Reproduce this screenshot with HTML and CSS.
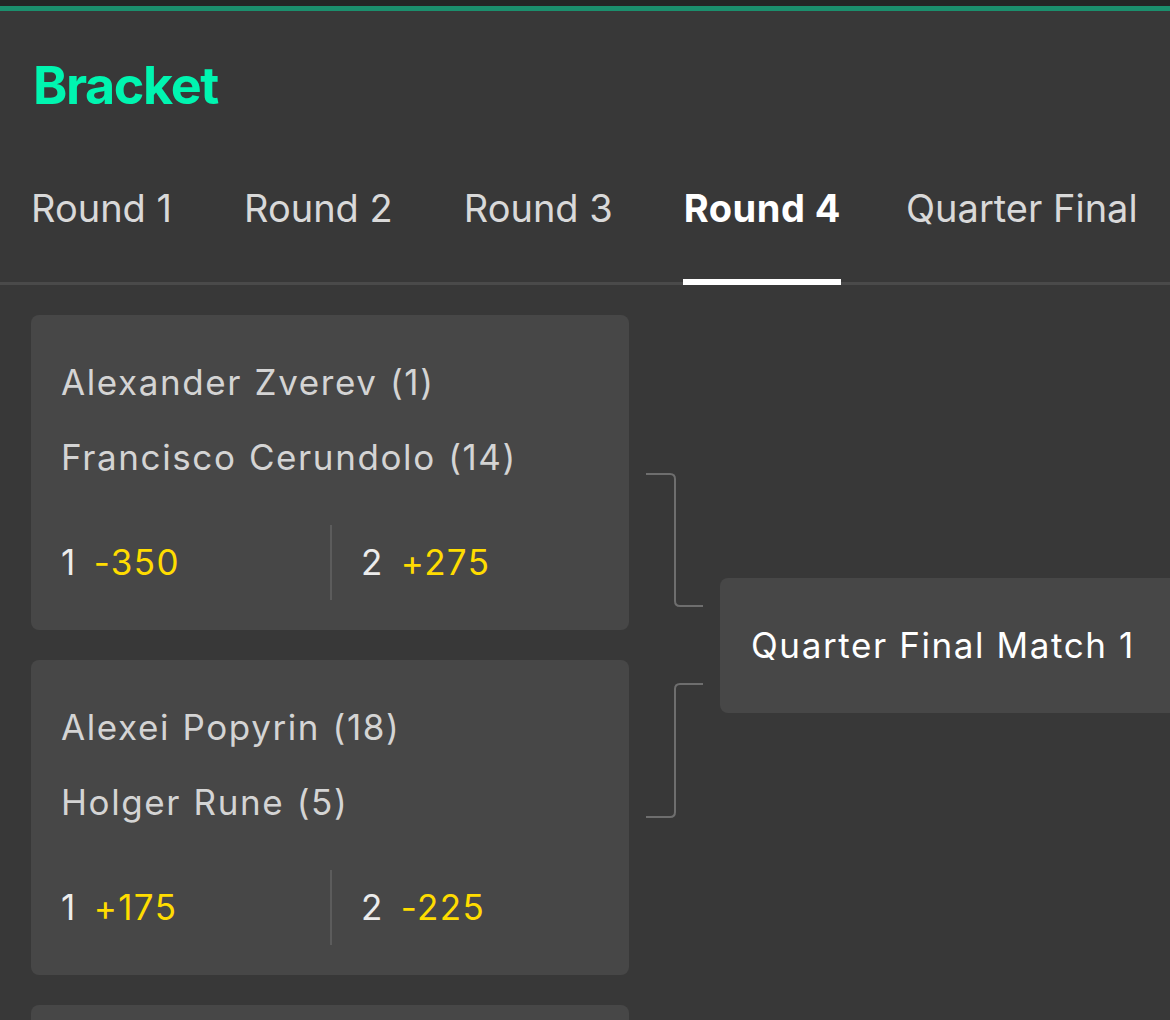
FILE: index.html
```html
<!DOCTYPE html>
<html lang="en">
<head>
<meta charset="utf-8">
<title>Bracket</title>
<link rel="stylesheet" href="styles.css">
</head>
<body>
<div class="topbar"></div>
<header class="header">
  <h1 class="title">Bracket</h1>
  <nav class="tabs">
    <span class="tab">Round 1</span>
    <span class="tab">Round 2</span>
    <span class="tab">Round 3</span>
    <span class="tab active">Round 4</span>
    <span class="tab">Quarter Final</span>
    <span class="tab">Semi Final</span>
  </nav>
</header>
<main class="bracket">
  <section class="pair">
    <div class="matches">
      <div class="card">
        <div class="names">
          <div class="name">Alexander Zverev (1)</div>
          <div class="name">Francisco Cerundolo (14)</div>
        </div>
        <div class="odds">
          <div class="odd"><span class="pick">1</span><span class="price">-350</span></div>
          <div class="odd"><span class="pick">2</span><span class="price">+275</span></div>
        </div>
      </div>
      <div class="card">
        <div class="names">
          <div class="name">Alexei Popyrin (18)</div>
          <div class="name">Holger Rune (5)</div>
        </div>
        <div class="odds">
          <div class="odd"><span class="pick">1</span><span class="price">+175</span></div>
          <div class="odd"><span class="pick">2</span><span class="price">-225</span></div>
        </div>
      </div>
    </div>
    <svg class="connector" width="91" height="660" viewBox="0 0 91 660" aria-hidden="true">
      <path d="M17 159 H41 Q46 159 46 164 V286 Q46 291 51 291 H74" />
      <path d="M74 369 H51 Q46 369 46 374 V497 Q46 502 41 502 H17" />
    </svg>
    <div class="next">
      <div class="next-card">Quarter Final Match 1</div>
    </div>
  </section>
  <section class="pair">
    <div class="matches">
      <div class="card">
        <div class="names">
          <div class="name">Taylor Fritz (12)</div>
          <div class="name">Casper Ruud (6)</div>
        </div>
        <div class="odds">
          <div class="odd"><span class="pick">1</span><span class="price">+110</span></div>
          <div class="odd"><span class="pick">2</span><span class="price">-140</span></div>
        </div>
      </div>
      <div class="card">
        <div class="names">
          <div class="name">Daniil Medvedev (5)</div>
          <div class="name">Grigor Dimitrov (10)</div>
        </div>
        <div class="odds">
          <div class="odd"><span class="pick">1</span><span class="price">-200</span></div>
          <div class="odd"><span class="pick">2</span><span class="price">+160</span></div>
        </div>
      </div>
    </div>
    <svg class="connector" width="91" height="660" viewBox="0 0 91 660" aria-hidden="true">
      <path d="M17 159 H41 Q46 159 46 164 V286 Q46 291 51 291 H74" />
      <path d="M74 369 H51 Q46 369 46 374 V497 Q46 502 41 502 H17" />
    </svg>
    <div class="next">
      <div class="next-card">Quarter Final Match 2</div>
    </div>
  </section>
</main>
</body>
</html>
```

FILE: styles.css
```css
html, body {
  margin: 0;
  padding: 0;
}

body {
  background: #383838;
  font-family: "Inter", "Liberation Sans", sans-serif;
  color: #d6d6d6;
  overflow: hidden;
  width: 1170px;
}

.topbar {
  height: 6px;
  background: #242626;
  border-bottom: 5px solid #1b8f6d;
}

.header {
  display: flex;
  flex-direction: column;
}

.title {
  margin: 45px 0 0 33px;
  font-size: 52px;
  line-height: 60px;
  font-weight: 700;
  color: #00f5b0;
  letter-spacing: -1.4px;
}

.tabs {
  display: flex;
  gap: 71px;
  margin-top: 69px;
  padding: 0 0 0 31px;
  border-bottom: 3px solid #4a4a4a;
  white-space: nowrap;
}

.tab {
  position: relative;
  font-size: 38px;
  line-height: 46px;
  padding-bottom: 51px;
  color: #d9d9d9;
  flex: none;
}

.tab:first-child {
  margin-right: 1px;
}

.tab.active {
  color: #ffffff;
  font-weight: 700;
  letter-spacing: 0.5px;
  margin-right: -6px;
}

.tab.active::after {
  content: "";
  position: absolute;
  left: -1px;
  right: 0;
  bottom: -3px;
  height: 6px;
  background: #ffffff;
}

.bracket {
  display: flex;
  flex-direction: column;
  gap: 30px;
  padding: 30px 0 0 31px;
}

.pair {
  display: flex;
  align-items: stretch;
}

.matches {
  display: flex;
  flex-direction: column;
  gap: 30px;
  width: 598px;
  flex: none;
}

.card {
  background: #474747;
  border-radius: 8px;
  padding: 30px 30px 30px 30px;
}

.name {
  font-size: 35px;
  line-height: 75px;
  letter-spacing: 1.6px;
  word-spacing: 1px;
  color: #d4d4d4;
  white-space: nowrap;
}

.odds {
  display: grid;
  grid-template-columns: 1fr 1fr;
  margin-top: 30px;
  height: 75px;
}

.odd {
  display: flex;
  align-items: center;
  gap: 17px;
  font-size: 35px;
  line-height: 75px;
  letter-spacing: 1.4px;
}

.odd + .odd {
  border-left: 2px solid #5c5c5c;
  padding-left: 29px;
}

.pick {
  color: #ececec;
}

.price {
  color: #ffdc00;
}

.connector {
  flex: none;
  display: block;
}

.connector path {
  fill: none;
  stroke: #6e6e6e;
  stroke-width: 2;
}

.next {
  display: flex;
  align-items: center;
  flex: none;
}

.next-card {
  width: 520px;
  height: 135px;
  box-sizing: border-box;
  padding-left: 31px;
  display: flex;
  align-items: center;
  background: #474747;
  border-radius: 8px;
  font-size: 35px;
  letter-spacing: 1.6px;
  color: #ffffff;
  white-space: nowrap;
}
```
